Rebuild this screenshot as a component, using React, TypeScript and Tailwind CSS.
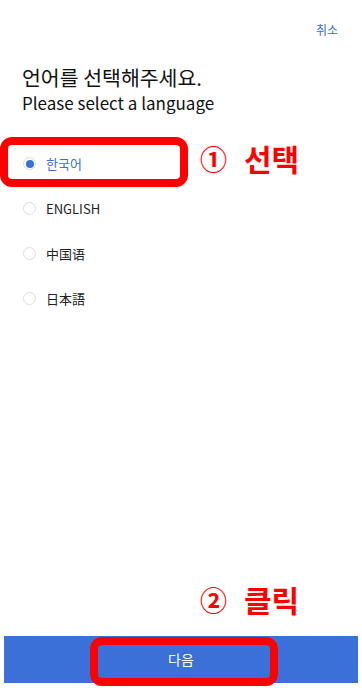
const languages = [
  { code: 'ko', label: '한국어' },
  { code: 'en', label: 'ENGLISH' },
  { code: 'zh', label: '中国语' },
  { code: 'ja', label: '日本語' },
];

export default function App() {
  const selected = 'ko';

  return (
    <div className="relative flex h-[690px] w-full flex-col bg-white font-['Noto_Sans_CJK_KR','Noto_Sans',sans-serif]">
      {/* Header */}
      <div className="flex justify-end pr-[24px] pt-[22px]">
        <button className="text-[12px] leading-[16px] text-[#3b6fd8]">취소</button>
      </div>

      {/* Title */}
      <div className="mt-[26px] px-[22px] text-[#111]">
        <h1 className="text-[20.5px] font-normal leading-[27px]">언어를 선택해주세요.</h1>
        <p className="text-[17px] leading-[24px]">Please select a language</p>
      </div>

      {/* Language list */}
      <ul className="mt-[26px] px-[23px]">
        {languages.map((lang) => {
          const active = lang.code === selected;
          return (
            <li key={lang.code} className="flex h-[45px] items-center gap-[10px]">
              <span className="flex h-[13px] w-[13px] items-center justify-center rounded-full border border-[#dcdcdc] bg-white">
                {active && <span className="h-[8px] w-[8px] rounded-full bg-[#3b6fd8]" />}
              </span>
              <span className={`text-[13px] leading-[18px] ${active ? 'text-[#3b6fd8]' : 'text-[#222]'}`}>
                {lang.label}
              </span>
            </li>
          );
        })}
      </ul>

      <div className="flex-1" />

      {/* Next button */}
      <div className="mx-[4px] mb-[7px] flex h-[47px] items-center justify-center bg-[#3b70d9]">
        <span className="text-[14px] text-white">다음</span>
      </div>

      {/* Annotations */}
      <div className="absolute left-0 top-[137px] h-[50px] w-[188px] rounded-[12px] border-[8px] border-[#ff0000]" />
      <div className="absolute left-[200px] top-[138px] flex h-[40px] items-center font-bold text-[#ff0000]">
        <span className="text-[27px] leading-none">①</span>
        <span className="ml-[17px] text-[30px] leading-none">선택</span>
      </div>
      <div className="absolute left-[200px] top-[579px] flex h-[40px] items-center font-bold text-[#ff0000]">
        <span className="text-[27px] leading-none">②</span>
        <span className="ml-[17px] text-[30px] leading-none">클릭</span>
      </div>
      <div className="absolute left-[90px] top-[637px] h-[49px] w-[188px] rounded-[12px] border-[8px] border-[#ff0000]" />
    </div>
  );
}
